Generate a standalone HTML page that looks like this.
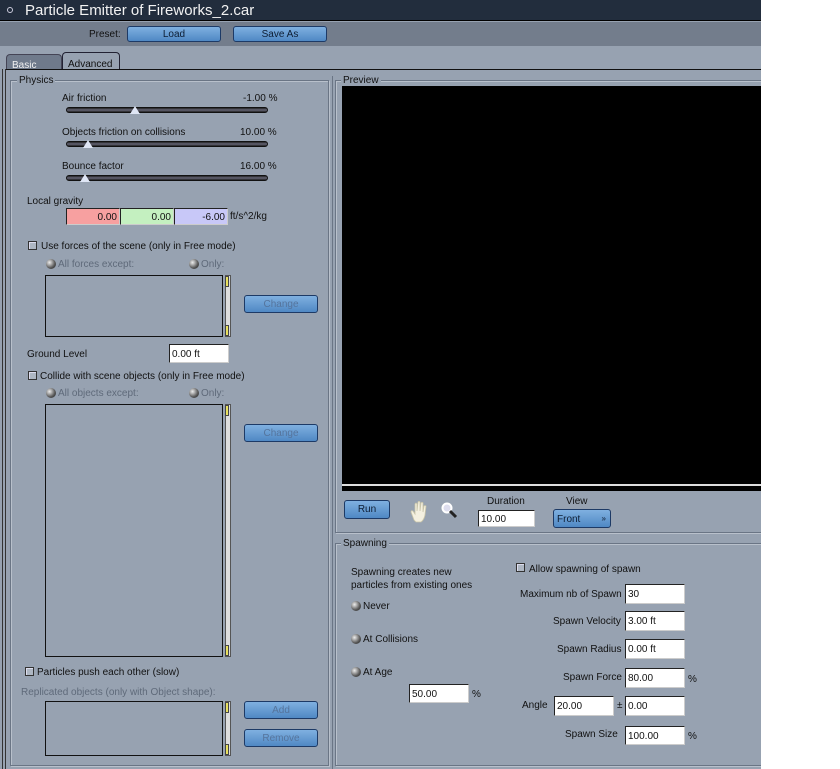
<!DOCTYPE html>
<html><head><meta charset="utf-8"><style>
*{box-sizing:border-box;margin:0;padding:0}
body{width:840px;height:769px;background:#fff;font-family:"Liberation Sans",Arial,sans-serif;font-size:10px;color:#111;position:relative;overflow:hidden}
.a{position:absolute}
.t{position:absolute;white-space:nowrap;line-height:12px;margin-top:1px}
.btn{position:absolute;background:linear-gradient(#7fb0e0,#4f88c4);border:1px solid #1d3a66;border-radius:3px;text-align:center;font-size:10px;color:#0d1d33;line-height:15px}
.btn.dis{color:#55749c}
.in{position:absolute;background:#fff;border:1px solid #222;border-right-color:#ccc;border-bottom-color:#ccc;font-size:10px;padding-left:2px;display:flex;align-items:center;padding-top:1px}
.fs{position:absolute;border:1px solid #6a7585;box-shadow:1px 1px 0 #b8c0cb inset,1px 1px 0 #b8c0cb}
.lg{position:absolute;background:#97a2b1;padding:0 2px;line-height:12px;margin-top:1px}
.cb{position:absolute;width:9px;height:9px;border:1px solid #333;background:#aeb7c3;box-shadow:1px 1px 0 #dde inset}
.rd{position:absolute;width:10px;height:10px;border-radius:50%;background:radial-gradient(circle at 35% 35%,#eee,#555 60%,#222)}
.dim{color:#5f6a7a}
.list{position:absolute;border:1px solid #111;background:#97a2b1}
.sb{position:absolute;width:6px;background:#ddd;border:1px solid #555}
.sb i{position:absolute;left:0;width:4px;height:11px;background:#e8e060;border:1px solid #444;margin-left:-1px}
.tr{position:absolute;height:6px;border-radius:3px;background:linear-gradient(#222,#667 50%,#222);border:1px solid #111}
.th{position:absolute;width:0;height:0;border-left:5px solid transparent;border-right:5px solid transparent;border-bottom:8px solid #dfe6f5}
</style></head><body>
<div class="a" style="left:0;top:0;width:761px;height:769px;background:#97a2b1"></div>
<div class="a" style="left:0;top:0;width:761px;height:21px;background:#222d3d;border-bottom:1px solid #000"></div>
<div class="a" style="left:7px;top:7px;width:6px;height:6px;border-radius:50%;border:1px solid #ccd"></div>
<div class="t" style="left:25px;top:1px;font-size:15px;line-height:17px;color:#f2f2f2">Particle Emitter of Fireworks_2.car</div>
<div class="a" style="left:0;top:22px;width:761px;height:24px;background:#737d8c"></div>
<div class="t" style="left:89px;top:28px;color:#111">Preset:</div>
<div class="btn" style="left:127px;top:26px;width:94px;height:16px">Load</div>
<div class="btn" style="left:233px;top:26px;width:94px;height:16px">Save As</div>
<div class="a" style="left:6px;top:54px;width:56px;height:16px;background:#6f7a8b;border:1px solid #445;border-bottom:none;border-radius:4px 4px 0 0"></div>
<div class="t" style="left:12px;top:59px;color:#f0f0f0">Basic</div>
<div class="a" style="left:62px;top:52px;width:58px;height:18px;background:#97a2b1;border:1px solid #223;border-bottom:none;border-radius:4px 4px 0 0"></div>
<div class="t" style="left:68px;top:58px">Advanced</div>
<div class="a" style="left:5px;top:69px;width:756px;height:1px;background:#111"></div>
<div class="a" style="left:5px;top:69px;width:1px;height:700px;background:#333"></div>
<div class="a" style="left:2px;top:69px;width:1px;height:700px;background:#333"></div>

<div class="fs" style="left:10px;top:80px;width:319px;height:686px"></div>
<div class="lg" style="left:17px;top:74px">Physics</div>
<div class="t" style="left:62px;top:92px">Air friction</div><div class="t" style="left:243px;top:92px">-1.00 %</div>
<div class="tr" style="left:66px;top:107px;width:202px"></div><div class="th" style="left:130px;top:106px"></div>
<div class="t" style="left:62px;top:126px">Objects friction on collisions</div><div class="t" style="left:240px;top:126px">10.00 %</div>
<div class="tr" style="left:66px;top:141px;width:202px"></div><div class="th" style="left:83px;top:140px"></div>
<div class="t" style="left:62px;top:160px">Bounce factor</div><div class="t" style="left:240px;top:160px">16.00 %</div>
<div class="tr" style="left:66px;top:175px;width:202px"></div><div class="th" style="left:80px;top:174px"></div>
<div class="t" style="left:27px;top:195px">Local gravity</div>
<div class="in" style="left:66px;top:208px;width:54px;height:17px;background:#f7a0a0;justify-content:flex-end;padding-right:2px">0.00</div>
<div class="in" style="left:120px;top:208px;width:54px;height:17px;background:#c4f0c0;justify-content:flex-end;padding-right:2px">0.00</div>
<div class="in" style="left:174px;top:208px;width:54px;height:17px;background:#c8c8f8;justify-content:flex-end;padding-right:2px">-6.00</div>
<div class="t" style="left:230px;top:210px">ft/s^2/kg</div>
<div class="cb" style="left:28px;top:241px"></div><div class="t" style="left:41px;top:240px">Use forces of the scene (only in Free mode)</div>
<div class="rd" style="left:46px;top:259px"></div><div class="t dim" style="left:58px;top:258px">All forces except:</div>
<div class="rd" style="left:189px;top:259px"></div><div class="t dim" style="left:201px;top:258px">Only:</div>
<div class="list" style="left:45px;top:275px;width:178px;height:62px"></div>
<div class="sb" style="left:225px;top:275px;height:62px"><i style="top:0"></i><i style="bottom:0"></i></div>
<div class="btn dis" style="left:244px;top:295px;width:74px;height:18px;line-height:17px">Change</div>
<div class="t" style="left:27px;top:348px">Ground Level</div>
<div class="in" style="left:169px;top:344px;width:60px;height:19px">0.00 ft</div>
<div class="cb" style="left:28px;top:371px"></div><div class="t" style="left:40px;top:370px">Collide with scene objects (only in Free mode)</div>
<div class="rd" style="left:46px;top:388px"></div><div class="t dim" style="left:58px;top:387px">All objects except:</div>
<div class="rd" style="left:189px;top:388px"></div><div class="t dim" style="left:201px;top:387px">Only:</div>
<div class="list" style="left:45px;top:404px;width:178px;height:253px"></div>
<div class="sb" style="left:225px;top:404px;height:253px"><i style="top:0"></i><i style="bottom:0"></i></div>
<div class="btn dis" style="left:244px;top:424px;width:74px;height:18px;line-height:17px">Change</div>
<div class="cb" style="left:25px;top:667px"></div><div class="t" style="left:37px;top:666px">Particles push each other (slow)</div>
<div class="t dim" style="left:21px;top:686px">Replicated objects (only with Object shape):</div>
<div class="list" style="left:45px;top:701px;width:178px;height:55px"></div>
<div class="sb" style="left:225px;top:701px;height:55px"><i style="top:0"></i><i style="bottom:0"></i></div>
<div class="btn dis" style="left:244px;top:701px;width:74px;height:18px;line-height:17px">Add</div>
<div class="btn dis" style="left:244px;top:729px;width:74px;height:18px;line-height:17px">Remove</div>

<div class="a" style="left:332px;top:76px;width:1px;height:693px;background:#6a7585"></div>
<div class="fs" style="left:335px;top:80px;width:430px;height:453px"></div>
<div class="lg" style="left:341px;top:74px">Preview</div>
<div class="a" style="left:342px;top:86px;width:419px;height:405px;background:#000"></div>
<div class="a" style="left:342px;top:484px;width:419px;height:2px;background:#ddd"></div>
<div class="btn" style="left:344px;top:500px;width:46px;height:19px;line-height:17px">Run</div>
<svg class="a" style="left:408px;top:500px" width="22" height="24" viewBox="0 0 22 24"><path d="M6 20 L3 12 Q3 10 5 11 L7 14 L7 4 Q8 2 9 4 L9 11 L10 2 Q11 0.5 12 2 L12 11 L13 3 Q14 1.5 15 3 L15 12 L16 6 Q17 5 18 6 L17 15 Q16 20 13 22 L8 22 Z" fill="#f4f0e0" stroke="#c8c4a8" stroke-width="0.8"/></svg>
<svg class="a" style="left:440px;top:501px" width="20" height="20"><circle cx="7" cy="7" r="4.5" fill="#dde" stroke="#fff" stroke-width="2"/><line x1="10" y1="10" x2="16" y2="16" stroke="#222" stroke-width="3"/></svg>
<div class="t" style="left:487px;top:495px">Duration</div>
<div class="in" style="left:478px;top:510px;width:57px;height:17px">10.00</div>
<div class="t" style="left:566px;top:495px">View</div>
<div class="btn" style="left:553px;top:509px;width:58px;height:19px;text-align:left;padding-left:3px;line-height:20px">Front<span style="position:absolute;right:4px;top:-1px;font-size:8px">»</span></div>
<div class="fs" style="left:335px;top:543px;width:430px;height:223px"></div>
<div class="lg" style="left:341px;top:537px">Spawning</div>
<div class="t" style="left:351px;top:566px">Spawning creates new</div>
<div class="t" style="left:351px;top:579px">particles from existing ones</div>
<div class="rd" style="left:351px;top:601px"></div><div class="t" style="left:363px;top:600px">Never</div>
<div class="rd" style="left:351px;top:634px"></div><div class="t" style="left:363px;top:633px">At Collisions</div>
<div class="rd" style="left:351px;top:667px"></div><div class="t" style="left:363px;top:666px">At Age</div>
<div class="in" style="left:409px;top:684px;width:60px;height:19px">50.00</div><div class="t" style="left:472px;top:688px">%</div>
<div class="cb" style="left:516px;top:563px"></div><div class="t" style="left:529px;top:563px">Allow spawning of spawn</div>
<div class="t" style="left:520px;top:588px">Maximum nb of Spawn</div><div class="in" style="left:625px;top:584px;width:60px;height:20px">30</div>
<div class="t" style="left:553px;top:615px">Spawn Velocity</div><div class="in" style="left:625px;top:611px;width:60px;height:20px">3.00 ft</div>
<div class="t" style="left:557px;top:643px">Spawn Radius</div><div class="in" style="left:625px;top:639px;width:60px;height:20px">0.00 ft</div>
<div class="t" style="left:563px;top:671px">Spawn Force</div><div class="in" style="left:625px;top:668px;width:60px;height:20px">80.00</div><div class="t" style="left:688px;top:673px">%</div>
<div class="t" style="left:522px;top:699px">Angle</div><div class="in" style="left:554px;top:696px;width:60px;height:20px">20.00</div>
<div class="t" style="left:617px;top:699px">±</div><div class="in" style="left:625px;top:696px;width:60px;height:20px">0.00</div>
<div class="t" style="left:565px;top:728px">Spawn Size</div><div class="in" style="left:625px;top:726px;width:60px;height:19px">100.00</div><div class="t" style="left:688px;top:730px">%</div>
<div class="a" style="left:761px;top:0;width:79px;height:769px;background:#fff"></div>
</body></html>
